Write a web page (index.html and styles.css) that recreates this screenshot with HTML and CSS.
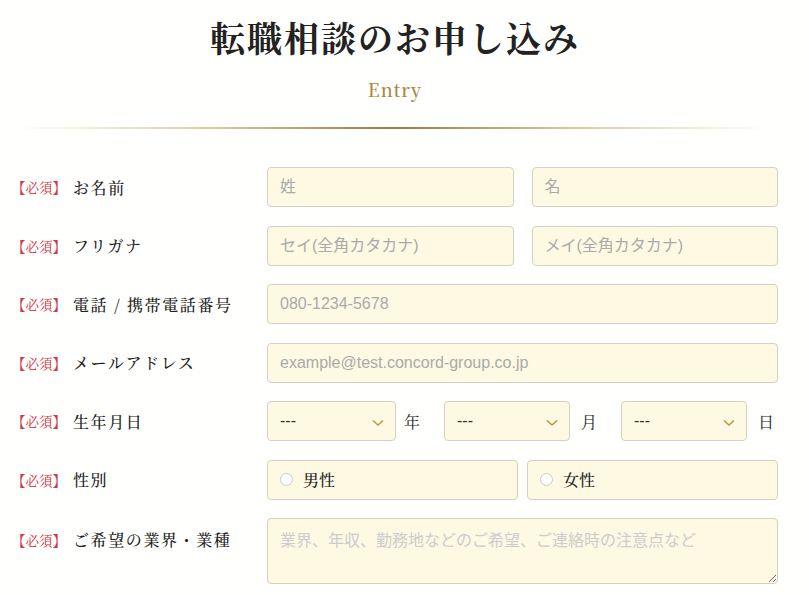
FILE: index.html
```html
<!DOCTYPE html>
<html lang="ja">
<head>
<meta charset="utf-8">
<title>転職相談のお申し込み</title>
<link rel="stylesheet" href="styles.css">
</head>
<body>
<div class="page">
  <header class="head">
    <h1 class="title">転職相談のお申し込み</h1>
    <p class="sub">Entry</p>
    <div class="rule"></div>
  </header>
  <form class="form">
    <div class="row">
      <div class="label"><span class="req">【必須】</span>お名前</div>
      <div class="field two">
        <input class="inp" type="text" placeholder="姓">
        <input class="inp" type="text" placeholder="名">
      </div>
    </div>
    <div class="row">
      <div class="label"><span class="req">【必須】</span>フリガナ</div>
      <div class="field two">
        <input class="inp" type="text" placeholder="セイ(全角カタカナ)">
        <input class="inp" type="text" placeholder="メイ(全角カタカナ)">
      </div>
    </div>
    <div class="row">
      <div class="label"><span class="req">【必須】</span>電話 / 携帯電話番号</div>
      <div class="field">
        <input class="inp" type="text" placeholder="080-1234-5678">
      </div>
    </div>
    <div class="row">
      <div class="label"><span class="req">【必須】</span>メールアドレス</div>
      <div class="field">
        <input class="inp" type="text" placeholder="example@test.concord-group.co.jp">
      </div>
    </div>
    <div class="row">
      <div class="label"><span class="req">【必須】</span>生年月日</div>
      <div class="field date">
        <div class="sel s1"><span>---</span><svg class="chev" viewBox="0 0 12 8" width="12" height="8"><path d="M1 1.5 L6 6 L11 1.5" fill="none" stroke="#b8924a" stroke-width="1.4"/></svg></div>
        <span class="unit u1">年</span>
        <div class="sel"><span>---</span><svg class="chev" viewBox="0 0 12 8" width="12" height="8"><path d="M1 1.5 L6 6 L11 1.5" fill="none" stroke="#b8924a" stroke-width="1.4"/></svg></div>
        <span class="unit">月</span>
        <div class="sel"><span>---</span><svg class="chev" viewBox="0 0 12 8" width="12" height="8"><path d="M1 1.5 L6 6 L11 1.5" fill="none" stroke="#b8924a" stroke-width="1.4"/></svg></div>
        <span class="unit last">日</span>
      </div>
    </div>
    <div class="row">
      <div class="label"><span class="req">【必須】</span>性別</div>
      <div class="field radios">
        <label class="radio"><span class="dot"></span>男性</label>
        <label class="radio"><span class="dot"></span>女性</label>
      </div>
    </div>
    <div class="row top">
      <div class="label"><span class="req">【必須】</span>ご希望の業界・業種</div>
      <div class="field">
        <textarea class="ta" placeholder="業界、年収、勤務地などのご希望、ご連絡時の注意点など"></textarea>
      </div>
    </div>
  </form>
</div>
</body>
</html>
```
FILE: styles.css
```css
* { box-sizing: border-box; }
html, body { margin: 0; padding: 0; }
body {
  background: #fffffd;
  color: #333;
  font-family: "Noto Serif CJK JP", "Liberation Serif", "Noto Sans CJK JP", serif;
}
.page {
  width: 766px;
  margin-left: 12px;
}
.head {
  text-align: center;
  padding-top: 13px;
}
.title {
  margin: 0;
  font-size: 35px;
  line-height: 48px;
  font-weight: 700;
  letter-spacing: 2px;
  color: #222;
}
.sub {
  margin: 17px 0 0;
  font-size: 18px;
  line-height: 22px;
  letter-spacing: 1px;
  color: #a8853f;
  font-family: "Noto Serif CJK JP", "Liberation Serif", serif;
  font-weight: 500;
}
.rule {
  margin: 27px 0 0 6px;
  width: 752px;
  height: 2px;
  background: linear-gradient(to right, rgba(230,200,150,0) 0%, rgba(200,170,110,0.6) 25%, #9c7a3c 50%, rgba(200,170,110,0.6) 75%, rgba(230,200,150,0) 100%);
}
.form {
  margin-top: 38px;
  display: flex;
  flex-direction: column;
  gap: 18.5px;
}
.row {
  display: flex;
  align-items: center;
}
.row.top { align-items: flex-start; }
.row.top .label { padding-top: 10px; }
.label {
  width: 255px;
  flex: none;
  font-size: 16px;
  font-weight: 500;
  letter-spacing: 1.6px;
  color: #222;
  display: flex;
  align-items: center;
}
.req {
  color: #d2374a;
  font-size: 13.5px;
  font-weight: 400;
  letter-spacing: 0;
  margin-right: 7px;
}
.field { flex: 1; display: flex; }
.field.two { gap: 18px; }
.field.two .inp { flex: 1; min-width: 0; }
.inp, .sel, .radio, .ta {
  background: #fef9e3;
  border: 1px solid #d6d0c3;
  border-radius: 4px;
}
.inp {
  width: 100%;
  height: 40px;
  padding: 0 12px;
  font-family: "Liberation Sans", "Noto Sans CJK JP", sans-serif;
  font-size: 16px;
  color: #333;
  outline: none;
}
.inp::placeholder { color: #aaa; }
.date { align-items: center; }
.sel {
  width: 126px;
  height: 40px;
  display: flex;
  align-items: center;
  justify-content: space-between;
  padding: 0 11px 0 12px;
  font-family: "Liberation Sans", sans-serif;
  font-size: 16px;
  color: #333;
}
.sel.s1 { width: 129px; }
.chev { margin-top: 3px; }
.unit {
  font-size: 16px;
  color: #222;
  padding: 0 24px 0 11px;
}
.unit.u1 { padding-left: 8px; }
.unit.last { padding-right: 0; }
.radios { gap: 9px; }
.radio {
  flex: 1;
  height: 40px;
  display: flex;
  align-items: center;
  padding-left: 12px;
  font-size: 16px;
  font-weight: 500;
  color: #222;
}
.dot {
  width: 13px;
  height: 13px;
  border-radius: 50%;
  border: 1px solid #c9c9c9;
  background: #fff;
  margin-right: 10px;
}
.ta {
  width: 100%;
  height: 66px;
  padding: 8px 12px;
  font-family: "Noto Sans CJK JP", sans-serif;
  font-size: 16px;
  line-height: 24px;
  color: #333;
  resize: both;
  outline: none;
}
.ta::placeholder { color: #ccc; }
```
